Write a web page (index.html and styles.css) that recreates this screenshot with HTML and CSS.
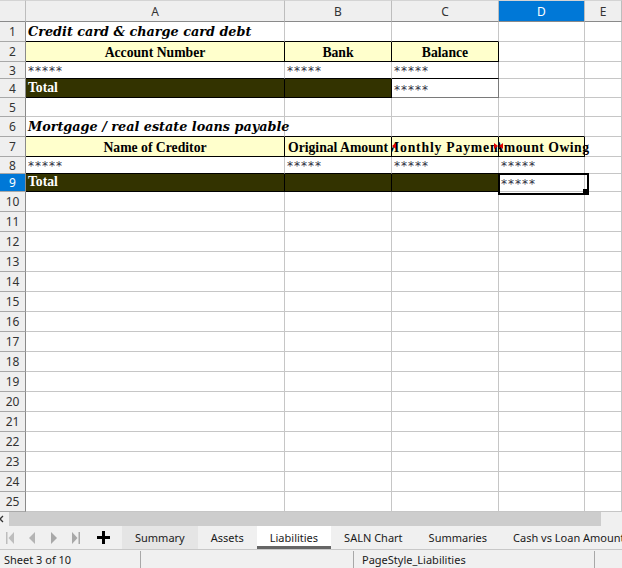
FILE: index.html
```html
<!DOCTYPE html>
<html lang="en">
<head>
<meta charset="utf-8">
<title>Liabilities</title>
<link rel="stylesheet" href="styles.css">
</head>
<body>
<div class="app">
  <div class="sheet">
    <div class="ch"></div><div class="ch">A</div><div class="ch">B</div><div class="ch">C</div><div class="ch sel">D</div><div class="ch">E</div>

    <div class="rh">1</div><div class="c ttl bb">Credit card &amp; charge card debt</div><div class="c bb"></div><div class="c bb"></div><div class="c"></div><div class="c"></div>
    <div class="rh">2</div><div class="c hdr bb rb">Account Number</div><div class="c hdr bb rb">Bank</div><div class="c hdr bb rb">Balance</div><div class="c"></div><div class="c"></div>
    <div class="rh">3</div><div class="c mask bb">*****</div><div class="c mask bb">*****</div><div class="c mask bb rd">*****</div><div class="c"></div><div class="c"></div>
    <div class="rh">4</div><div class="c tot bb rb">Total</div><div class="c tot bb rb"></div><div class="c mask bd rd">*****</div><div class="c"></div><div class="c"></div>
    <div class="rh">5</div><div class="c"></div><div class="c"></div><div class="c"></div><div class="c"></div><div class="c"></div>
    <div class="rh">6</div><div class="c ttl bb">Mortgage / real estate loans payable</div><div class="c bb"></div><div class="c bb"></div><div class="c bb"></div><div class="c"></div>
    <div class="rh">7</div><div class="c hdr bb rb">Name of Creditor</div><div class="c hdr bb rb">Original Amount</div><div class="c hdr bb rb clip both"><span class="wide">Monthly Payment</span></div><div class="c hdr bb rb clip-left"><span class="wider">Amount Owing</span></div><div class="c"></div>
    <div class="rh">8</div><div class="c mask bb">*****</div><div class="c mask bb">*****</div><div class="c mask bb">*****</div><div class="c mask">*****</div><div class="c"></div>
    <div class="rh sel">9</div><div class="c tot bb rb">Total</div><div class="c tot bb rb"></div><div class="c tot bb rb"></div><div class="c mask cursor">*****</div><div class="c"></div>

    <div class="rh">10</div><div class="c"></div><div class="c"></div><div class="c"></div><div class="c"></div><div class="c"></div>
    <div class="rh">11</div><div class="c"></div><div class="c"></div><div class="c"></div><div class="c"></div><div class="c"></div>
    <div class="rh">12</div><div class="c"></div><div class="c"></div><div class="c"></div><div class="c"></div><div class="c"></div>
    <div class="rh">13</div><div class="c"></div><div class="c"></div><div class="c"></div><div class="c"></div><div class="c"></div>
    <div class="rh">14</div><div class="c"></div><div class="c"></div><div class="c"></div><div class="c"></div><div class="c"></div>
    <div class="rh">15</div><div class="c"></div><div class="c"></div><div class="c"></div><div class="c"></div><div class="c"></div>
    <div class="rh">16</div><div class="c"></div><div class="c"></div><div class="c"></div><div class="c"></div><div class="c"></div>
    <div class="rh">17</div><div class="c"></div><div class="c"></div><div class="c"></div><div class="c"></div><div class="c"></div>
    <div class="rh">18</div><div class="c"></div><div class="c"></div><div class="c"></div><div class="c"></div><div class="c"></div>
    <div class="rh">19</div><div class="c"></div><div class="c"></div><div class="c"></div><div class="c"></div><div class="c"></div>
    <div class="rh">20</div><div class="c"></div><div class="c"></div><div class="c"></div><div class="c"></div><div class="c"></div>
    <div class="rh">21</div><div class="c"></div><div class="c"></div><div class="c"></div><div class="c"></div><div class="c"></div>
    <div class="rh">22</div><div class="c"></div><div class="c"></div><div class="c"></div><div class="c"></div><div class="c"></div>
    <div class="rh">23</div><div class="c"></div><div class="c"></div><div class="c"></div><div class="c"></div><div class="c"></div>
    <div class="rh">24</div><div class="c"></div><div class="c"></div><div class="c"></div><div class="c"></div><div class="c"></div>
    <div class="rh">25</div><div class="c"></div><div class="c"></div><div class="c"></div><div class="c"></div><div class="c"></div>
  </div>

  <div class="hscroll">
    <svg class="hs-arrow" width="6" height="14" viewBox="0 0 6 14"><path d="M4 4 L1 7 L4 10" fill="none" stroke="#333" stroke-width="1.3"/></svg>
    <div class="hs-thumb"></div>
  </div>

  <div class="tabbar">
    <div class="nav">
      <svg width="8" height="12" viewBox="0 0 8 12"><rect x="0" y="0" width="1.5" height="12" fill="#bdbdbd"/><path d="M8 0 L2.5 6 L8 12 Z" fill="#bdbdbd"/></svg>
      <svg width="8" height="12" viewBox="0 0 8 12"><path d="M7 0 L1 6 L7 12 Z" fill="#b4b4b4"/></svg>
      <svg width="8" height="12" viewBox="0 0 8 12"><path d="M1 0 L7 6 L1 12 Z" fill="#a8a8a8"/></svg>
      <svg width="8" height="12" viewBox="0 0 8 12"><path d="M0 0 L5.5 6 L0 12 Z" fill="#a8a8a8"/><rect x="6.5" y="0" width="1.5" height="12" fill="#a8a8a8"/></svg>
    </div>
    <svg class="plus" width="13" height="13" viewBox="0 0 13 13"><path d="M6.5 0 V13 M0 6.5 H13" stroke="#000" stroke-width="3"/></svg>
    <div class="tabs">
      <div class="tab hover">Summary</div>
      <div class="tab">Assets</div>
      <div class="tab active">Liabilities</div>
      <div class="tab">SALN Chart</div>
      <div class="tab">Summaries</div>
      <div class="tab">Cash vs Loan Amount</div>
    </div>
  </div>

  <div class="status">
    <div class="sec s1">Sheet 3 of 10</div>
    <div class="sec s2"></div>
    <div class="sec s3">PageStyle_Liabilities</div>
    <div class="sec s4"></div>
  </div>
</div>
</body>
</html>
```

FILE: styles.css
```css
* { box-sizing: border-box; margin: 0; padding: 0; }

html, body {
  width: 622px;
  height: 568px;
  overflow: hidden;
  background: #fff;
}

body {
  font-family: "Noto Sans", sans-serif;
  color: #222;
}

.app {
  display: flex;
  flex-direction: column;
  height: 568px;
}

/* ---------- sheet grid ---------- */
.sheet {
  display: grid;
  grid-template-columns: 26px 259px 107px 107px 86px 1fr;
  grid-template-rows: 22px 20px 20px 17px 19px 19px 20px 20px 17px 18px repeat(16, 20px);
  height: 512px;
  flex: none;
  overflow: hidden;
}

.ch {
  background: #efefef;
  border-top: 1px solid #d4d4d4;
  border-right: 1px solid #bdbdbd;
  border-bottom: 1px solid #8a8a8a;
  display: flex;
  align-items: center;
  justify-content: center;
  font-size: 12px;
  color: #333;
}

.rh {
  background: #efefef;
  border-right: 1px solid #8a8a8a;
  border-bottom: 1px solid #a8a8a8;
  display: flex;
  align-items: center;
  justify-content: center;
  font-size: 12px;
  color: #333;
}

.ch.sel, .rh.sel {
  background: #0078d7;
  color: #fff;
}

.c {
  border-right: 1px solid #c6c6c6;
  border-bottom: 1px solid #c6c6c6;
  display: flex;
  align-items: flex-end;
  min-width: 0;
  white-space: nowrap;
  padding: 0 0 1px 2px;
  font-family: "Liberation Serif", serif;
  font-size: 13.7px;
  color: #000;
}

.bb { border-bottom-color: #000; }
.rb { border-right-color: #000; }
.bd { border-bottom-color: #7a7a7a; }
.rd { border-right-color: #7a7a7a; }

.ttl {
  font-family: "DejaVu Serif", serif;
  font-weight: bold;
  font-style: italic;
  font-size: 12.8px;
  padding-bottom: 2px;
}

.hdr {
  background: #ffffcc;
  font-weight: bold;
  justify-content: center;
  padding-left: 0;
  padding-bottom: 0;
}

.tot {
  background: #333300;
  color: #fff;
  font-weight: bold;
  padding-bottom: 1px;
}

.mask {
  font-family: "DejaVu Sans", sans-serif;
  font-size: 12px;
  letter-spacing: 1px;
  color: #2d2d40;
  padding-bottom: 0;
}

/* clipped overflowing header text with red markers */
.clip {
  position: relative;
  overflow: hidden;
}
.clip-left {
  position: relative;
  clip-path: inset(0 -40px 0 0);
}
.clip span, .clip-left span { flex: none; }
.wide { letter-spacing: 0.8px; }
.wider { letter-spacing: 0.5px; }

.clip::before, .clip-left::before {
  content: "";
  position: absolute;
  left: 0;
  top: 6px;
  border-top: 3px solid transparent;
  border-bottom: 3px solid transparent;
  border-right: 4px solid #e00000;
}
.clip.both::after {
  content: "";
  position: absolute;
  right: 0;
  top: 6px;
  border-top: 3px solid transparent;
  border-bottom: 3px solid transparent;
  border-left: 4px solid #e00000;
}

/* cell cursor */
.cursor { position: relative; overflow: visible; }
.cursor::before {
  content: "";
  position: absolute;
  left: -1px;
  top: -1px;
  width: 87px;
  height: 18px;
  border: 2px solid #000;
}
.cursor::after {
  content: "";
  position: absolute;
  left: 84px;
  top: 15px;
  width: 4px;
  height: 5px;
  background: #000;
}

/* ---------- horizontal scrollbar ---------- */
.hscroll {
  height: 14px;
  flex: none;
  display: flex;
  align-items: stretch;
  background: #f0f0f0;
}
.hs-arrow { margin-left: -1px; }
.hs-thumb {
  width: 592px;
  margin-left: 4px;
  background: #cdcdcd;
}

/* ---------- sheet tabs ---------- */
.tabbar {
  height: 23px;
  flex: none;
  display: flex;
  align-items: center;
  background: #f0f0f0;
  overflow: hidden;
  font-size: 11px;
  color: #1a1a1a;
}
.nav {
  display: flex;
  gap: 14px;
  padding-left: 6px;
  align-items: center;
}
.plus { margin-left: 17px; flex: none; }
.tabs {
  display: flex;
  height: 100%;
  margin-left: 12px;
  white-space: nowrap;
}
.tab {
  display: flex;
  align-items: center;
  padding: 0 13px;
  height: 100%;
  border-bottom: 3px solid transparent;
  padding-top: 3px;
}
.tab.hover { background: #e5e5e5; }
.tab.active {
  background: #fff;
  border-bottom-color: #666;
}

/* ---------- status bar ---------- */
.status {
  height: 19px;
  flex: none;
  display: flex;
  background: #f0f0f0;
  border-top: 1px solid #c8c8c8;
  font-size: 11px;
  color: #1a1a1a;
}
.sec {
  display: flex;
  align-items: center;
  border-right: 1px solid #a8a8a8;
  margin: 1px 0 0;
  white-space: nowrap;
}
.s1 { width: 141px; padding-left: 4px; }
.s2 { width: 213px; }
.s3 { width: 241px; padding-left: 8px; }
.s4 { flex: 1; border-right: none; }
```
